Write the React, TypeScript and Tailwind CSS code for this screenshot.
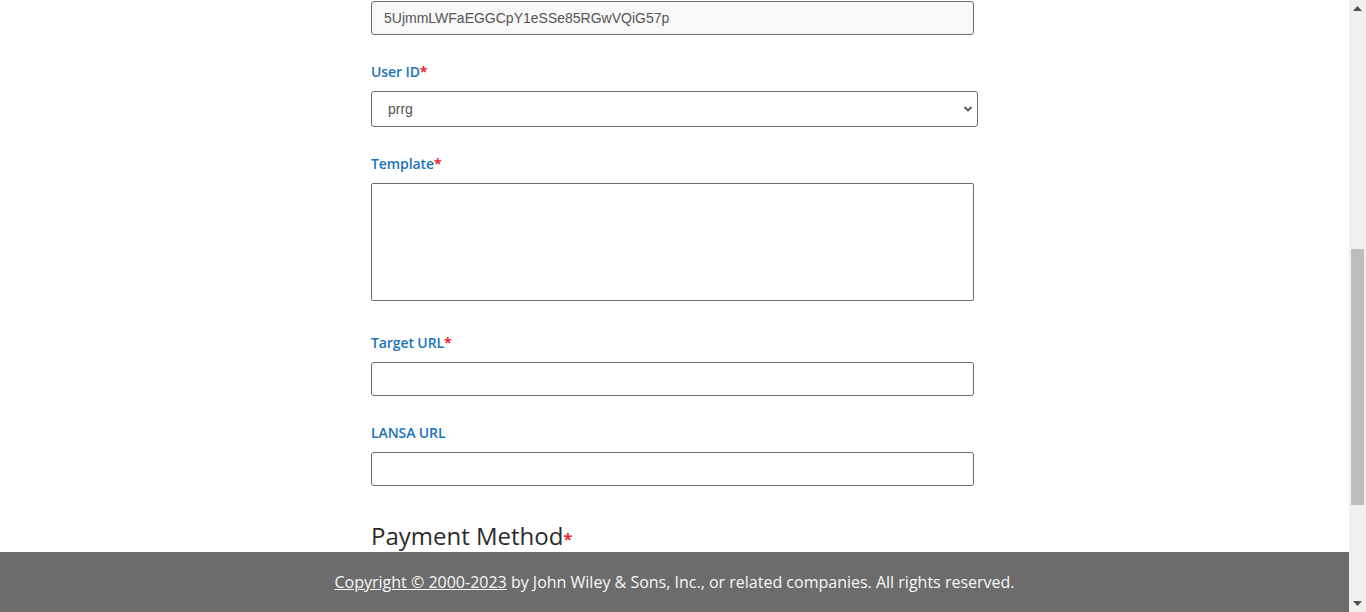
import React from "react";

function Label({ text, required }: { text: string; required?: boolean }) {
  return (
    <div className="text-[14px] leading-[20px] font-semibold tracking-[-0.1px] text-[#1b75bb] mb-[9px]" style={{ fontFamily: '"Open Sans", sans-serif' }}>
      {text}
      {required && <span className="text-[#e8262b] font-bold">*</span>}
    </div>
  );
}

export default function App() {
  return (
    <div className="w-[1366px] h-[612px] flex flex-row overflow-hidden bg-white">
      <div className="w-[1349px] h-[612px] flex flex-col">
        <main className="flex-1 overflow-hidden pl-[371px] pt-[1px]" style={{ fontFamily: '"Liberation Sans", Arial, sans-serif' }}>
          <input
            readOnly
            value="5UjmmLWFaEGGCpY1eSSe85RGwVQiG57p"
            className="block w-[603px] h-[34px] border border-[#6b6b6b] rounded-[3px] bg-[#f8f8f8] pl-[12px] text-[14px] text-[#555555] outline-none"
          />
          <div className="mt-[27px]">
            <Label text="User ID" required />
            <div className="relative w-[607px]">
              <select className="block appearance-none w-[607px] h-[36px] border border-[#6b6b6b] rounded-[3px] bg-white pl-[16px] text-[14px] text-[#555555] outline-none">
                <option>prrg</option>
              </select>
              <svg className="absolute right-[5px] top-[14px]" width="10" height="8" viewBox="0 0 10 8">
                <path d="M1.5 2 L5 5.5 L8.5 2" fill="none" stroke="#555" strokeWidth="1.8" />
              </svg>
            </div>
          </div>
          <div className="mt-[27px]">
            <Label text="Template" required />
            <textarea className="block w-[603px] h-[118px] border border-[#6b6b6b] rounded-[2px] bg-white resize-none outline-none" />
          </div>
          <div className="mt-[32px]">
            <Label text="Target URL" required />
            <input className="block w-[603px] h-[34px] border border-[#6b6b6b] rounded-[3px] bg-white outline-none" />
          </div>
          <div className="mt-[27px]">
            <Label text="LANSA URL" />
            <input className="block w-[603px] h-[34px] border border-[#6b6b6b] rounded-[3px] bg-white outline-none" />
          </div>
          <div className="mt-[34px] text-[24px] leading-[32px] font-normal text-[#2b2b2b]" style={{ fontFamily: '"Open Sans", sans-serif' }}>
            Payment Method<span className="text-[#e8262b] text-[16px] font-bold">*</span>
          </div>
        </main>
        <footer className="h-[60px] bg-[#6c6c6c] flex items-center justify-center text-[16px] text-[#f7f7f7]" style={{ fontFamily: '"Open Sans", sans-serif' }}>
          <span>
            <span className="underline">Copyright © 2000-2023</span> by John Wiley &amp; Sons, Inc., or related companies. All rights reserved.
          </span>
        </footer>
      </div>
      <div className="w-[17px] h-[612px] bg-[#f0f0f0] flex flex-col items-center">
        <div className="h-[17px] flex items-center justify-center">
          <svg width="9" height="5" viewBox="0 0 9 5"><path d="M0 5 L4.5 0 L9 5 Z" fill="#505050" /></svg>
        </div>
        <div className="h-[232px]" />
        <div className="w-[13px] h-[256px] bg-[#bdbdbd]" />
        <div className="flex-1" />
        <div className="h-[17px] flex items-center justify-center">
          <svg width="9" height="5" viewBox="0 0 9 5"><path d="M0 0 L9 0 L4.5 5 Z" fill="#505050" /></svg>
        </div>
      </div>
    </div>
  );
}
